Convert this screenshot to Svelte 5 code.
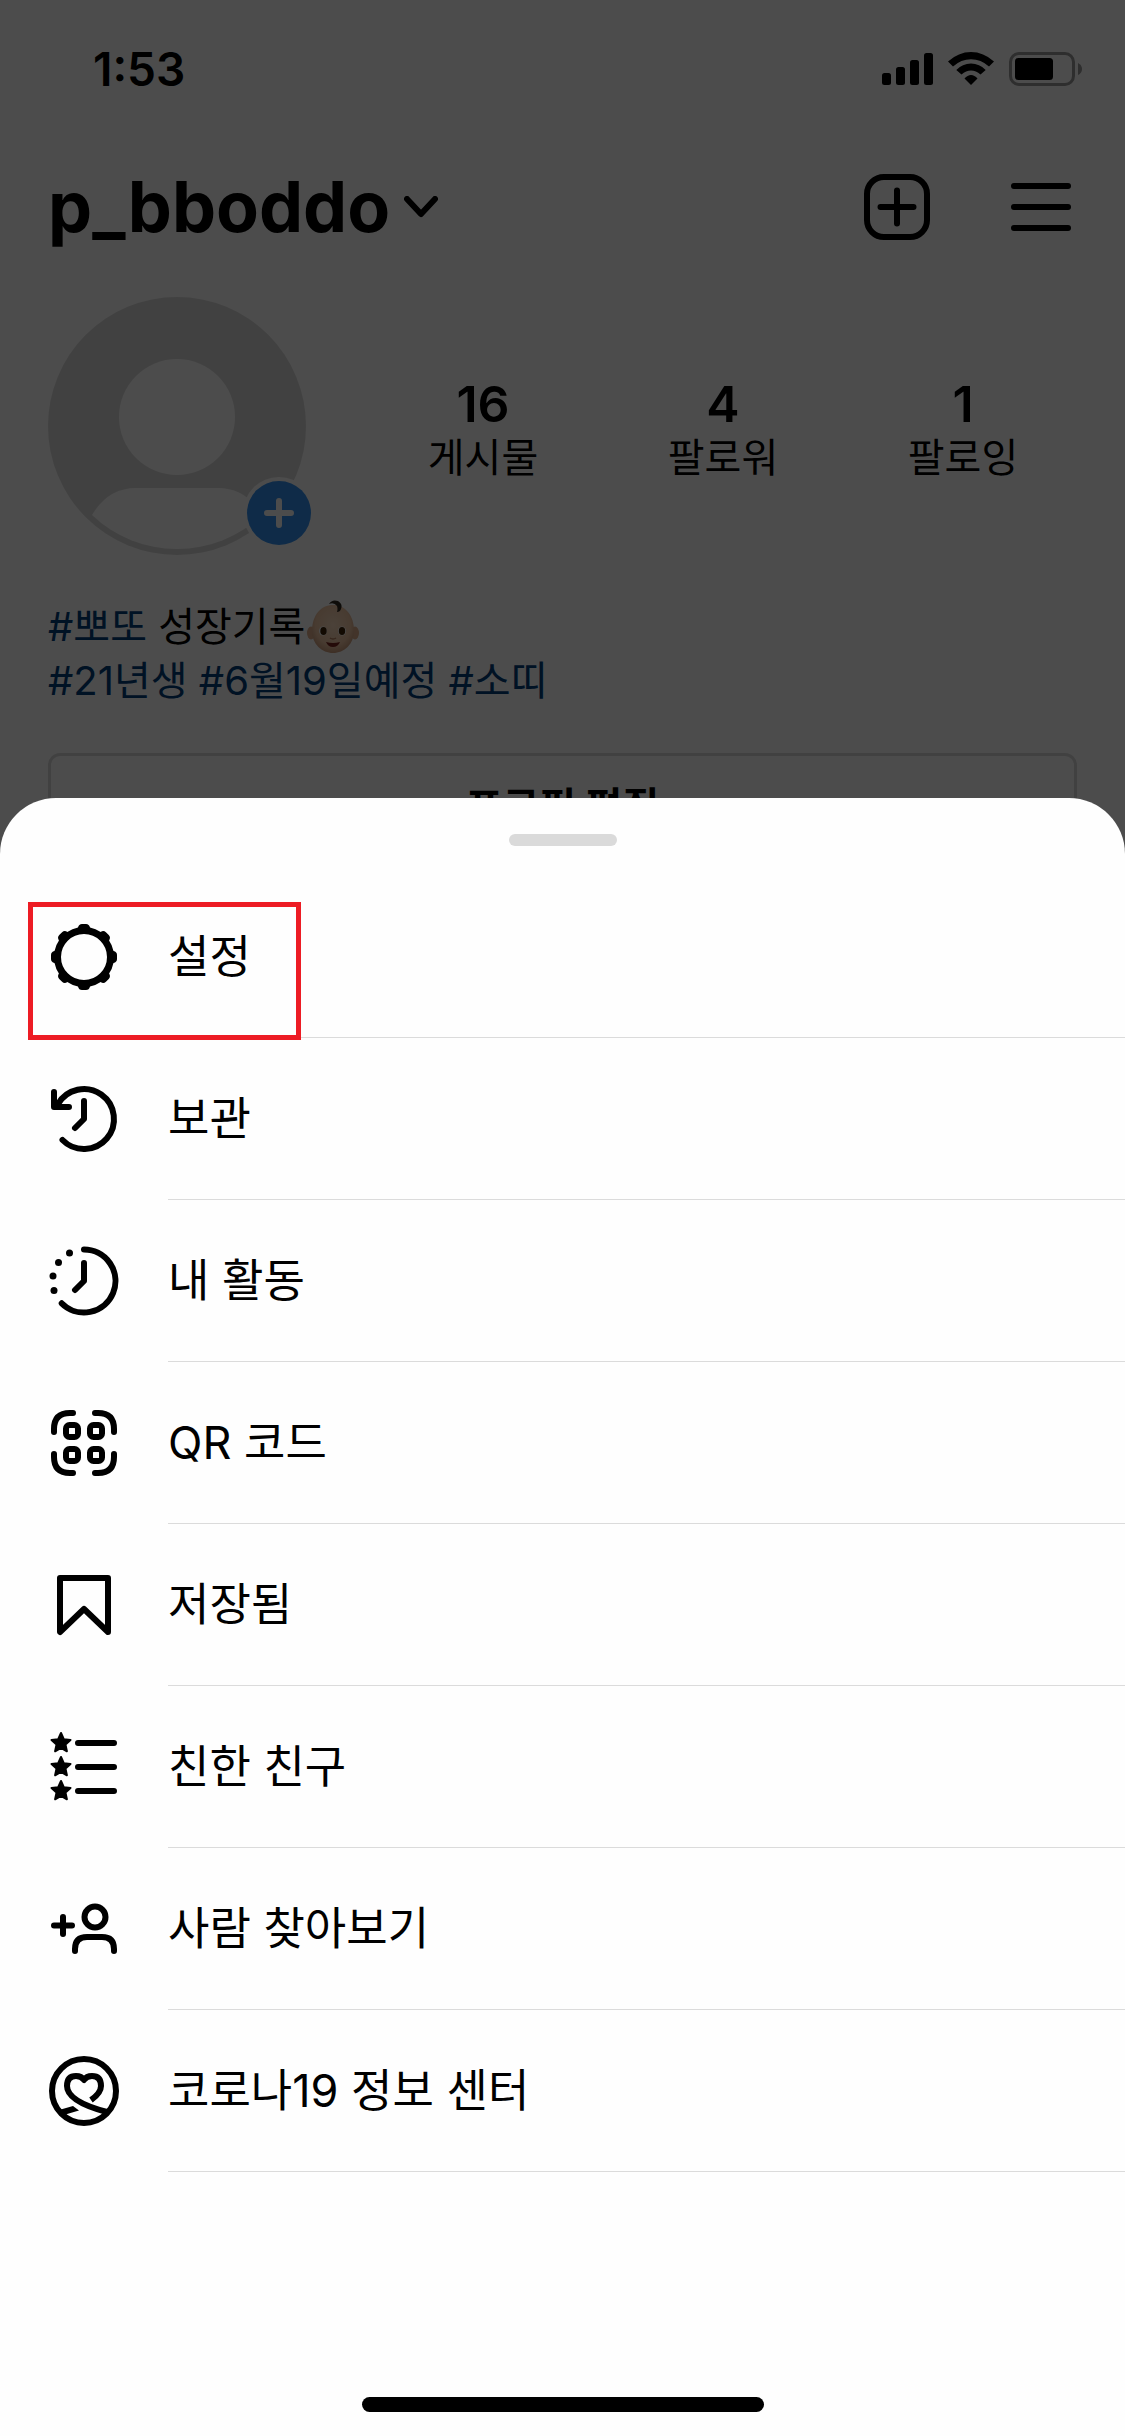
<script>
	const stats = [
		{ value: 16, label: '게시물' },
		{ value: 4, label: '팔로워' },
		{ value: 1, label: '팔로잉' }
	];

	const items = [
		{ icon: 'settings', label: '설정', marked: true },
		{ icon: 'archive', label: '보관' },
		{ icon: 'activity', label: '내 활동' },
		{ icon: 'qr', label: 'QR 코드' },
		{ icon: 'saved', label: '저장됨' },
		{ icon: 'friends', label: '친한 친구' },
		{ icon: 'discover', label: '사람 찾아보기' },
		{ icon: 'covid', label: '코로나19 정보 센터' }
	];

	const teeth = [0, 45, 90, 135, 180, 225, 270, 315];
	const star = 'M13 2l2.800 6.200 6.700.8-5 4.600 1.400 6.700L13 17l-5.900 3.300 1.400-6.700-5-4.600 6.700-.8z';
</script>

<div class="screen">
	<div class="profile">
		<div class="status">
			<span class="time">1:53</span>
			<svg class="signals" viewBox="0 0 200 34" aria-hidden="true">
				<rect x="0" y="21" width="9" height="12" rx="2.500" />
				<rect x="14" y="15" width="9" height="18" rx="2.500" />
				<rect x="28" y="8" width="9" height="25" rx="2.500" />
				<rect x="42" y="1" width="9" height="32" rx="2.500" />
				<path d="M66 9.500Q76.500 0 89 0T112 9.500L107 14.500Q99 7.200 89 7.200T71 14.500z" />
				<path d="M74.300 18Q80.500 11.500 89 11.500T103.700 18L98.500 22.500Q94 18.400 89 18.400T79.500 22.500z" />
				<path d="M82.500 26.500Q85.500 23 89 23T95.500 26.500L89 33z" />
				<rect class="case" x="128.500" y="1.500" width="63" height="31" rx="8.500" />
				<rect x="133" y="6" width="38" height="22" rx="3.500" />
				<path class="tip" d="M196 11q4 2 4 6t-4 6z" />
			</svg>
		</div>

		<header>
			<button class="account">
				<h1>p_bboddo</h1>
				<svg class="chevron" viewBox="0 0 34 22" aria-hidden="true">
					<path d="M3 3l14 15L31 3" />
				</svg>
			</button>
			<button class="action" aria-label="만들기">
				<svg class="icon" viewBox="0 0 72 72">
					<rect x="6" y="6" width="60" height="60" rx="17" />
					<path d="M36 19.500v33M19.500 36h33" />
				</svg>
			</button>
			<button class="action" aria-label="메뉴">
				<svg class="icon" viewBox="0 0 72 72">
					<path d="M9 15h54M9 36h54M9 57h54" />
				</svg>
			</button>
		</header>

		<section class="summary">
			<button class="avatar" aria-label="프로필 사진 추가">
				<svg viewBox="0 0 264 258">
					<circle cx="129" cy="129" r="129" fill="#dbdbdb" />
					<circle cx="129" cy="120" r="58" fill="#fff" />
					<path
						d="M44 218Q60 191 88 191H170Q198 191 214 218A123 123 0 0 1 44 218z"
						fill="#fff"
					/>
					<circle cx="231" cy="216" r="36" fill="#fff" />
					<circle cx="231" cy="216" r="32" fill="#3291f0" />
					<path class="plus" d="M231 204v24M219 216h24" />
				</svg>
			</button>
			<dl>
				{#each stats as stat}
					<div class="stat">
						<dt>{stat.label}</dt>
						<dd>{stat.value}</dd>
					</div>
				{/each}
			</dl>
		</section>

		<p class="bio">
			<a href="#tag">#뽀또</a> 성장기록<svg class="baby" viewBox="0 0 52 54" role="img" aria-label="아기">
				<defs>
					<radialGradient id="skin" cx="50%" cy="42%" r="60%">
						<stop offset="0" stop-color="#fbdcc0" />
						<stop offset="0.700" stop-color="#f0c6a4" />
						<stop offset="1" stop-color="#c99878" />
					</radialGradient>
				</defs>
				<ellipse cx="4" cy="33" rx="4" ry="6.500" fill="#dfb08e" />
				<ellipse cx="48" cy="33" rx="4" ry="6.500" fill="#dfb08e" />
				<path
					d="M26 5C38 5 47 15 47 31 47 44 37 53 26 53S5 44 5 31C5 15 14 5 26 5z"
					fill="url(#skin)"
				/>
				<path d="M22 4Q25-1 31 1q5 3 3 8-1 3-4 3 1-3 0-6-3-4-8-2z" fill="#302820" />
				<ellipse cx="16" cy="31" rx="4" ry="4.500" fill="#fff" />
				<ellipse cx="35" cy="31" rx="4" ry="4.500" fill="#fff" />
				<ellipse cx="16.500" cy="31" rx="3.200" ry="4" fill="#3d2408" />
				<ellipse cx="35" cy="31" rx="3.200" ry="4" fill="#3d2408" />
				<path d="M23 38q3 2 6 0" stroke="#b57f5f" stroke-width="1.500" fill="none" />
				<path d="M19 42q7 2 14 0-2 5-7 5t-7-5z" fill="#7b2620" />
			</svg><br />
			<a href="#tag">#21년생</a> <a href="#tag">#6월19일예정</a> <a href="#tag">#소띠</a>
		</p>

		<button class="edit">프로필 편집</button>
	</div>

	<div class="backdrop"></div>

	<div class="sheet">
		<div class="handle"></div>
		<ul>
			{#each items as item}
				<li>
					<button class="item">
						<svg class="icon" viewBox="0 0 72 72" aria-hidden="true">
							{#if item.icon === 'settings'}
								<circle class="ring" cx="36" cy="36" r="26.500" />
								{#each teeth as angle}
									<path
										class="solid"
										transform="rotate({angle} 36 36)"
										d="M24 12.500Q29 10 30 6.500 30.800 3 34 3h4q3.200 0 4 3.500 1 3.500 6 6z"
									/>
								{/each}
							{:else if item.icon === 'archive'}
								<path d="M10 21A30 30 0 1 1 14.500 57M6 9v15h15" />
								<path d="M36 18v18l-9 9" />
							{:else if item.icon === 'activity'}
								<path d="M36 4.500A31.500 31.500 0 1 1 13.700 58.300" />
								<path d="M36 18v18l-9 9" />
								<g class="solid">
									<circle cx="21.500" cy="8" r="3.500" />
									<circle cx="10.500" cy="17.500" r="3.500" />
									<circle cx="5" cy="31" r="3.500" />
									<circle cx="6" cy="45.500" r="3.500" />
								</g>
							{:else if item.icon === 'qr'}
								<path
									d="M6 25v-3Q6 6 22 6h3M47 6h3q16 0 16 16v3M66 47v3q0 16-16 16h-3M25 66h-3Q6 66 6 50v-3"
								/>
								<rect x="18" y="18" width="12" height="12" rx="3.500" />
								<rect x="42" y="18" width="12" height="12" rx="3.500" />
								<rect x="18" y="42" width="12" height="12" rx="3.500" />
								<rect x="42" y="42" width="12" height="12" rx="3.500" />
							{:else if item.icon === 'saved'}
								<path d="M12 9h48v54L36 40 12 63z" />
							{:else if item.icon === 'friends'}
								<path d="M30 12h36M30 36h36M30 60h36" />
								<g class="star">
									<path d={star} />
									<path d={star} transform="translate(0 24)" />
									<path d={star} transform="translate(0 48)" />
								</g>
							{:else if item.icon === 'discover'}
								<circle cx="47" cy="24" r="10.500" />
								<path d="M27 58v-2q0-12 12-12h15q12 0 12 12v2" />
								<path d="M15 24v17M6 32.500h18" />
							{:else if item.icon === 'covid'}
								<circle cx="36" cy="36" r="32" />
								<path
									class="heart"
									d="M43 45Q53 38 53 31 53 21 44 21 38.500 21 36 25 33.500 21 28 21 19 21 19 31C19 44 40 52 59 57"
								/>
								<path class="solid" d="M11 55l14-4 6 4.500-17 5z" />
							{/if}
						</svg>
						<span class="label">{item.label}</span>
					</button>
					{#if item.marked}
						<span class="marker"></span>
					{/if}
				</li>
			{/each}
		</ul>
		<div class="home"></div>
	</div>
</div>

<style>
	:global(body) {
		margin: 0;
	}

	.screen {
		position: relative;
		min-height: 100vh;
		overflow: hidden;
		background: #fff;
		color: #000;
		font-family: Inter, 'Noto Sans CJK KR', sans-serif;
	}

	button {
		padding: 0;
		border: none;
		background: none;
		color: inherit;
		font: inherit;
		cursor: pointer;
	}

	svg {
		display: block;
		flex: none;
	}

	.status {
		display: flex;
		justify-content: space-between;
		align-items: center;
		height: 138px;
		padding: 0 43px 0 93px;
	}

	.time {
		font-size: 46px;
		font-weight: 600;
	}

	.signals {
		width: 200px;
		height: 34px;
	}

	.case {
		fill: none;
		stroke: #000;
		stroke-width: 3;
		opacity: 0.4;
	}

	.tip {
		opacity: 0.4;
	}

	header {
		display: flex;
		align-items: center;
		gap: 72px;
		height: 138px;
		padding: 0 48px;
	}

	.account {
		display: flex;
		align-items: center;
		gap: 14px;
		margin-right: auto;
	}

	h1 {
		margin: 0;
		font-size: 70px;
		font-weight: 700;
		line-height: 80px;
	}

	.chevron {
		width: 34px;
		height: 22px;
		fill: none;
		stroke: #000;
		stroke-width: 6;
		stroke-linecap: round;
		stroke-linejoin: round;
	}

	.icon {
		width: 72px;
		height: 72px;
		fill: none;
		stroke: #000;
		stroke-width: 6;
		stroke-linecap: round;
		stroke-linejoin: round;
	}

	.summary {
		display: flex;
		align-items: center;
		gap: 51px;
		padding: 21px 42px 0 48px;
	}

	.avatar svg {
		width: 264px;
		height: 258px;
		overflow: visible;
	}

	.plus {
		stroke: #fff;
		stroke-width: 6;
		stroke-linecap: round;
	}

	dl {
		display: grid;
		grid-template-columns: repeat(3, 1fr);
		flex: 1;
		margin: 0;
		padding-top: 10px;
		text-align: center;
	}

	.stat {
		display: flex;
		flex-direction: column-reverse;
	}

	dd {
		margin: 0;
		font-size: 50px;
		font-weight: 600;
		line-height: 54px;
	}

	dt {
		font-size: 40px;
		line-height: 54px;
	}

	.bio {
		margin: 45px 48px 0;
		font-size: 40px;
		line-height: 54px;
	}

	.bio a {
		color: #003c7a;
		text-decoration: none;
	}

	.baby {
		display: inline-block;
		width: 52px;
		height: 54px;
		margin-left: 2px;
		vertical-align: top;
	}

	.edit {
		display: block;
		width: calc(100% - 96px);
		height: 102px;
		margin: 45px 48px 0;
		border: 3px solid #dbdbdb;
		border-radius: 12px;
		font-size: 40px;
		font-weight: 700;
	}

	.backdrop {
		position: absolute;
		inset: 0;
		background: rgba(0, 0, 0, 0.7);
	}

	.sheet {
		position: absolute;
		right: 0;
		bottom: 0;
		left: 0;
		padding: 36px 0 24px;
		border-radius: 56px 56px 0 0;
		background: #fefefe;
	}

	.handle {
		width: 108px;
		height: 12px;
		margin: 0 auto 30px;
		border-radius: 6px;
		background: #dadada;
	}

	ul {
		margin: 0;
		padding: 0;
		list-style: none;
	}

	li {
		position: relative;
	}

	.item {
		display: flex;
		align-items: center;
		gap: 48px;
		width: 100%;
		padding-left: 48px;
		text-align: left;
	}

	.label {
		flex: 1;
		border-bottom: 1px solid #dbdbdb;
		font-size: 45px;
		line-height: 161px;
	}

	.solid {
		fill: #000;
		stroke: none;
	}

	.ring {
		stroke-width: 7;
	}

	.star {
		fill: #000;
		stroke-width: 2;
	}

	.heart {
		stroke-linecap: butt;
	}

	.marker {
		position: absolute;
		top: 26px;
		left: 28px;
		box-sizing: border-box;
		width: 273px;
		height: 138px;
		border: 5px solid #ed1c24;
		z-index: 1;
		pointer-events: none;
	}

	.home {
		width: 402px;
		height: 15px;
		margin: 225px auto 0;
		border-radius: 8px;
		background: #000;
	}
</style>
